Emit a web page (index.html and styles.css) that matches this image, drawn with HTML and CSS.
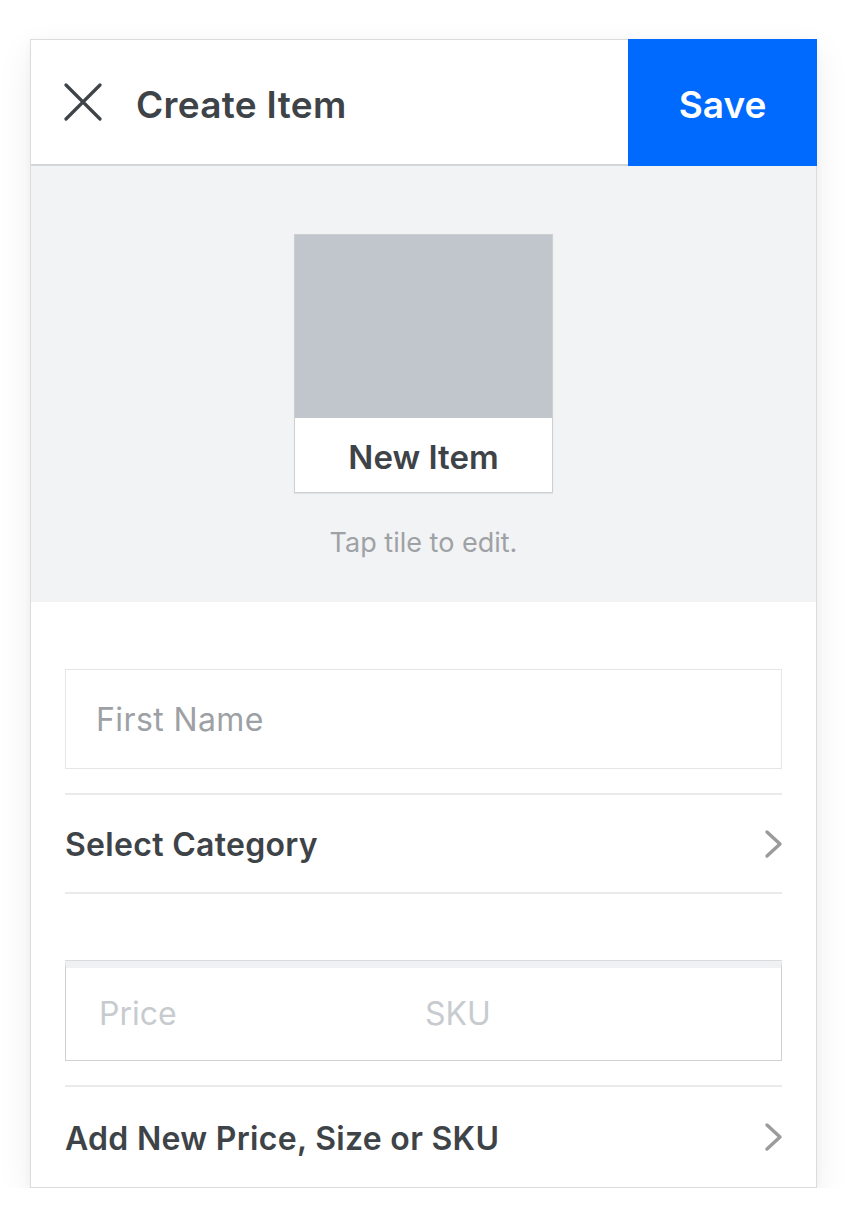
FILE: index.html
```html
<!DOCTYPE html>
<html lang="en">
<head>
<meta charset="utf-8">
<title>Create Item</title>
<link rel="stylesheet" href="styles.css">
</head>
<body>
<div class="card">
  <header class="topbar">
    <div class="title-wrap">
      <svg class="close" width="38" height="38" viewBox="0 0 38 38" aria-hidden="true">
        <path d="M2 2 L36 36 M36 2 L2 36" stroke="#3e4348" stroke-width="3.2" stroke-linecap="round" fill="none"/>
      </svg>
      <h1 class="title">Create Item</h1>
    </div>
    <button class="save">Save</button>
  </header>

  <section class="preview">
    <div class="tile">
      <div class="tile-img"></div>
      <div class="tile-label">New Item</div>
    </div>
    <p class="hint">Tap tile to edit.</p>
  </section>

  <section class="form">
    <div class="input">First Name</div>
    <div class="row row-first">
      <span class="row-label">Select Category</span>
      <svg class="chev" width="20" height="30" viewBox="0 0 20 30" aria-hidden="true">
        <path d="M3 3 L16 15 L3 27" stroke="#9a9b9d" stroke-width="3.4" stroke-linecap="round" stroke-linejoin="round" fill="none"/>
      </svg>
    </div>
    <div class="price-box">
      <span class="ph ph-price">Price</span>
      <span class="ph ph-sku">SKU</span>
    </div>
    <div class="row row-last">
      <span class="row-label">Add New Price, Size or SKU</span>
      <svg class="chev" width="20" height="30" viewBox="0 0 20 30" aria-hidden="true">
        <path d="M3 3 L16 15 L3 27" stroke="#9a9b9d" stroke-width="3.4" stroke-linecap="round" stroke-linejoin="round" fill="none"/>
      </svg>
    </div>
  </section>
</div>
</body>
</html>
```

FILE: styles.css
```css
* { box-sizing: border-box; }

html, body {
  margin: 0;
  padding: 0;
  background: #ffffff;
}

body {
  font-family: Inter, "Open Sans", "Liberation Sans", sans-serif;
  color: #3e4348;
  padding: 39px 0 0 30px;
}

.card {
  width: 787px;
  border: 1px solid #dadcde;
  background: #ffffff;
  box-shadow: 0 12px 34px rgba(0, 0, 0, 0.07), 0 2px 8px rgba(0, 0, 0, 0.04);
}

.topbar {
  display: flex;
  justify-content: space-between;
  align-items: stretch;
  height: 126px;
  border-bottom: 2px solid #d3d6d9;
}

.title-wrap {
  display: flex;
  align-items: center;
  padding-left: 33px;
  gap: 34px;
}

.close {
  display: block;
}

.title {
  margin: 0;
  padding-top: 4px;
  font-size: 37px;
  font-weight: 600;
  letter-spacing: 0.3px;
  color: #3e4348;
}

.save {
  width: 189px;
  margin: -1px -1px -2px 0;
  border: none;
  background: #006aff;
  color: #ffffff;
  font-family: Inter, "Open Sans", "Liberation Sans", sans-serif;
  font-size: 37px;
  font-weight: 600;
  padding: 3px 0 0;
}

.preview {
  background: #f2f3f4;
  height: 436px;
  padding-top: 68px;
  display: flex;
  flex-direction: column;
  align-items: center;
}

.tile {
  width: 259px;
  border: 1px solid #cdd0d3;
  background: #ffffff;
  box-shadow: 0 1px 1px rgba(0, 0, 0, 0.06);
}

.tile-img {
  height: 183px;
  background: #c1c6cc;
}

.tile-label {
  height: 74px;
  display: flex;
  align-items: center;
  justify-content: center;
  font-size: 33px;
  font-weight: 600;
  color: #3e4348;
  padding-top: 4px;
}

.hint {
  margin: 33px 0 0;
  font-size: 27px;
  color: #9ea2a6;
}

.form {
  padding: 67px 34px 0;
}

.input {
  height: 100px;
  border: 1px solid #e4e6e8;
  display: flex;
  align-items: center;
  padding-left: 30px;
  font-size: 32px;
  letter-spacing: 0.4px;
  color: #9da1a5;
}

.row {
  display: flex;
  align-items: center;
  justify-content: space-between;
  border-top: 2px solid #e8eaec;
}

.row-first {
  margin-top: 24px;
  height: 101px;
  border-bottom: 2px solid #e8eaec;
}

.row-last {
  margin-top: 24px;
  height: 102px;
}

.row-label {
  font-size: 32px;
  font-weight: 600;
  letter-spacing: 0.3px;
  color: #3e4348;
  padding-top: 2px;
}

.chev {
  display: block;
  margin-right: -2px;
}

.price-box {
  margin-top: 67px;
  height: 100px;
  border: 1px solid #cfd2d5;
  border-top: 7px solid #eff1f2;
  box-shadow: 0 -1px 0 #d9dcdf;
  display: flex;
  align-items: center;
  padding-left: 33px;
  padding-bottom: 2px;
  font-size: 32px;
  color: #c7cbcf;
}

.ph-price {
  width: 326px;
}
```
